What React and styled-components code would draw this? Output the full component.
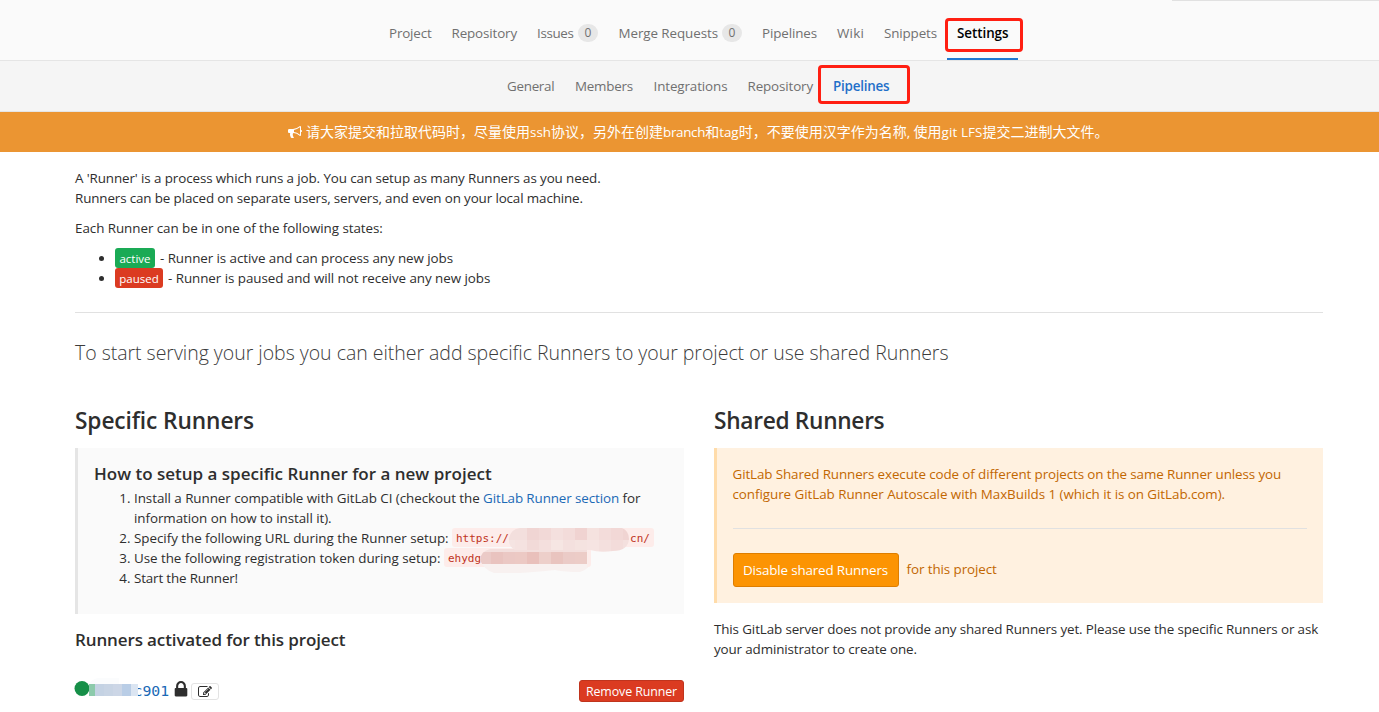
import React from "react";
import styled, { createGlobalStyle } from "styled-components";

const GlobalStyle = createGlobalStyle`
  * { box-sizing: border-box; }
  html, body { margin: 0; padding: 0; }
  body {
    width: 1379px;
    height: 712px;
    overflow: hidden;
    background: #fff;
    color: #2e2e2e;
    font-family: "Open Sans", "Noto Sans CJK SC", sans-serif;
    font-size: 13.4px;
    line-height: 20px;
    white-space: nowrap;
  }
  h3, h4, p, ul, ol { margin: 0; padding: 0; }
`;

const Tracked = styled.span`
  letter-spacing: ${(p) => p.$ls || 0}px;
`;

const Page = styled.div`
  display: flex;
  flex-direction: column;
  height: 712px;
`;

const MainNav = styled.nav`
  position: relative;
  display: flex;
  height: 61px;
  padding-left: 379px;
  background: #fafafa;
  border-bottom: 1px solid #e5e5e5;
`;

const HeaderEdge = styled.div`
  position: absolute;
  top: 0;
  right: 0;
  width: 207px;
  height: 1px;
  background: #e1e1e1;
`;

const SubNav = styled.nav`
  display: flex;
  height: 51px;
  padding-left: 497px;
  background: #f5f5f5;
  border-bottom: 1px solid #e5e5e5;
`;

const Tab = styled.a`
  position: relative;
  display: flex;
  flex: none;
  align-items: center;
  width: ${(p) => p.$width}px;
  padding: ${(p) => (p.$sub ? "0 10px 1px" : "6px 10px 0")};
  color: #707070;
  ${(p) => p.$active && `color: ${p.$sub ? "#1f6fc9" : "#000"}; font-weight: 600;`}
  ${(p) => p.$active && !p.$sub && "box-shadow: inset 0 -2px 0 #1f78d1;"}
`;

const Count = styled.span`
  width: 20px;
  height: 18px;
  margin-left: auto;
  margin-right: ${(p) => p.$gap}px;
  border-radius: 9px;
  background: #e7e7e7;
  font-size: 12px;
  line-height: 18px;
  text-align: center;
`;

const Marker = styled.span`
  position: absolute;
  top: ${(p) => p.$top}px;
  left: ${(p) => p.$left}px;
  width: ${(p) => p.$width}px;
  height: ${(p) => p.$height}px;
  border: 3px solid #ff1f12;
  border-radius: 4px;
`;

const Banner = styled.div`
  display: flex;
  align-items: center;
  gap: 4px;
  height: 40px;
  padding-left: 288px;
  background: #eb9532;
  color: #fff;
  font-size: 14px;
`;

const Latin = styled.span`
  font-size: 13.4px;
  letter-spacing: ${(p) => p.$ls || 0}px;
`;

const Content = styled.main`
  display: flex;
  flex-direction: column;
  width: 1248px;
  margin-left: 75px;
  padding-top: 16px;
`;

const Paragraph = styled.p`
  margin-bottom: 10px;
`;

const StateList = styled.ul`
  padding-left: 40px;
`;

const StateItem = styled.li`
  height: 20px;
`;

const StateBadge = styled.span`
  display: inline-block;
  height: 20px;
  width: ${(p) => p.$width}px;
  margin-right: 5px;
  border-radius: 3px;
  background: ${(p) => p.$color};
  color: #fff;
  font-size: 11.5px;
  line-height: 21px;
  text-align: center;
  vertical-align: top;
`;

const Rule = styled.div`
  height: 1px;
  margin-top: ${(p) => p.$gap}px;
  background: ${(p) => p.$color || "#e1e1e1"};
`;

const Lead = styled.h4`
  margin-top: 26px;
  color: #3c3c3c;
  font-size: 19.5px;
  font-weight: 300;
  line-height: 28px;
`;

const Columns = styled.div`
  display: grid;
  grid-template-columns: 609px 609px;
  column-gap: 30px;
  margin-top: 38px;
`;

const Column = styled.section`
  display: flex;
  flex-direction: column;
`;

const ColumnTitle = styled.h3`
  font-size: 22.7px;
  font-weight: 600;
  line-height: 32px;
  margin-bottom: 11px;
`;

const HelpBox = styled.div`
  position: relative;
  height: 166px;
  padding: 15px 16px;
  border-left: 3px solid #e5e5e5;
  background: #fafafa;
`;

const SubTitle = styled.h4`
  margin-top: ${(p) => p.$top || 0}px;
  font-size: 17px;
  font-weight: 600;
  line-height: 22px;
`;

const Steps = styled.ol`
  margin-top: 3px;
  padding-left: 40px;
`;

const Link = styled.a`
  color: #1b69b6;
  letter-spacing: -0.1px;
`;

const Code = styled.code`
  display: inline-block;
  height: 19px;
  width: ${(p) => p.$width}px;
  padding: 0 4px;
  border-radius: 3px;
  background: #fdecea;
  color: #c0341d;
  font-family: "DejaVu Sans Mono", monospace;
  font-size: 11px;
  line-height: 22px;
  vertical-align: top;
`;

const CodeRow = styled.span`
  display: inline-flex;
  justify-content: space-between;
  width: 100%;
`;

const Smudge = styled.svg`
  position: absolute;
  left: 402px;
  top: 79px;
`;

const WarnBox = styled.div`
  height: 155px;
  padding: 16px 16px 0 15.5px;
  border-left: 3px solid #ffdcaa;
  background: #fff1e0;
  color: #c26700;
`;

const Action = styled.div`
  display: flex;
  align-items: center;
  gap: 8px;
  margin-top: 24px;
`;

const ActionNote = styled(Tracked)`
  padding-bottom: 2px;
`;

const WarnButton = styled.button`
  width: 166px;
  height: 34px;
  padding: 0;
  border: 1px solid #de7e00;
  border-radius: 3px;
  background: #fc9403;
  color: #fff;
  font: inherit;
  letter-spacing: -0.16px;
`;

const Note = styled.p`
  margin-top: 16px;
`;

const RunnerRow = styled.div`
  display: flex;
  align-items: center;
  height: 22px;
  margin-top: 29px;
`;

const RunnerName = styled.span`
  position: relative;
  display: flex;
  align-items: center;
  width: 99px;
  height: 22px;
  padding: 0 0 1px 58.5px;
  color: #1b69b6;
  font-family: "DejaVu Sans Mono", monospace;
  font-size: 14.8px;
`;

const StatusArt = styled.svg`
  position: absolute;
  left: -1px;
  top: -4px;
`;

const LockIcon = styled.svg`
  margin-bottom: 5px;
`;

const EditButton = styled.button`
  display: flex;
  align-items: center;
  justify-content: center;
  width: 28px;
  height: 17px;
  margin: 1px auto 0 3px;
  padding: 0;
  border: 1px solid #e3e3e3;
  border-radius: 3px;
  background: #fff;
  color: #2e2e2e;
`;

const RemoveButton = styled.button`
  width: 105px;
  height: 22px;
  padding: 1px 0 0;
  border: 1px solid #c0341d;
  border-radius: 3px;
  background: #db3b21;
  color: #fff;
  font: inherit;
  font-size: 12.4px;
  line-height: 20px;
  letter-spacing: -0.1px;
`;

const Icon = ({ d, size }) => (
  <svg width={size} height={size} viewBox="0 0 1792 1792" fill="currentColor">
    <path d={d} />
  </svg>
);

const BULLHORN =
  "M1664 640q53 0 90.5 37.5t37.5 90.5-37.5 90.5-90.5 37.5v384q0 52-38 90t-90 38q-417-347-812-380-58 19-91 66t-31 100.5 40 92.5q-20 33-23 65.5t6 58 33.5 55 48 50 61.5 50.5q-29 58-111.5 83t-168.5 11.5-132-55.5q-7-23-29.5-87.5t-32-94.5-23-89-15-101 3.5-98.5 22-110.5h-122q-66 0-113-47t-47-113v-192q0-66 47-113t113-47h480q435 0 896-384 52 0 90 38t38 90v384zm-128 604v-954q-394 302-768 343v270q377 42 768 341z";
const LOCK =
  "M640 768h512v-192q0-106-75-181t-181-75-181 75-75 181v192zm832 96v576q0 40-28 68t-68 28h-960q-40 0-68-28t-28-68v-576q0-40 28-68t68-28h32v-192q0-184 132-316t316-132 316 132 132 316v192h32q40 0 68 28t28 68z";
const EDIT =
  "M888 1184l116-116-152-152-116 116v56h96v96h56zm440-720q-16-16-33 1l-350 350q-17 17-1 33t33-1l350-350q17-17 1-33zm80 594v190q0 119-84.5 203.5t-203.5 84.5h-832q-119 0-203.5-84.5t-84.5-203.5v-832q0-119 84.5-203.5t203.5-84.5h832q63 0 117 25 15 7 18 23 3 17-9 29l-49 49q-14 14-32 8-23-6-45-6h-832q-66 0-113 47t-47 113v832q0 66 47 113t113 47h832q66 0 113-47t47-113v-126q0-13 9-22l64-64q15-15 35-7t20 29zm-96-738l288 288-672 672h-288v-288zm444 132l-92 92-288-288 92-92q28-28 68-28t68 28l152 152q28 28 28 68t-28 68z";

const mainTabs = [
  { label: "Project", width: 62.5, ls: -0.17 },
  { label: "Repository", width: 85.5, ls: -0.13 },
  { label: "Issues", width: 81.5, ls: -0.36, count: 0, gap: 0.5 },
  { label: "Merge Requests", width: 143.5, ls: -0.08, count: 0, gap: 0 },
  { label: "Pipelines", width: 75, ls: -0.12 },
  { label: "Wiki", width: 47, ls: 0.2 },
  { label: "Snippets", width: 73, ls: -0.13 },
  { label: "Settings", width: 71, ls: -0.05, active: true, marker: [18, -2, 78, 34] },
];

const subTabs = [
  { label: "General", width: 68, ls: -0.28 },
  { label: "Members", width: 78.5, ls: -0.22 },
  { label: "Integrations", width: 94, ls: -0.11 },
  { label: "Repository", width: 85.5, ls: -0.13 },
  { label: "Pipelines", width: 77, ls: -0.2, active: true, marker: [4, -5, 92, 39] },
];

const upperBlocks = ["#f3dfdd", "#f3dfdd", "#f0d5d3", "#f2d9d7", "#f4e0de", "#f3dcda", "#f0d3d1", "#f5e2df", "#f3dcda", "#f2d8d6", "#f0d4d2"];
const middleBlocks = ["#f5e4e2", "#f5e2e0", "#f2dad8", "#f4dfdd", "#f6e6e3", "#f4e0de", "#f5e3e0", "#f6e4e2", "#f4e0de", "#f3dcda", "#f4e0de"];
const lowerBlocks = ["#ebcac7", "#e9c3bf", "#ebc8c4", "#ecc9c4", "#e9c0bb", "#edcfca", "#e9c4bf", "#ebcbc7", "#ecccc7", "#e8c4bd"];
const nameBlocks = ["#c4d2e3", "#c8d4e4", "#ccd6e6", "#b9cde6", "#dbe5f2"];

const Tabs = ({ items, sub }) =>
  items.map((t) => (
    <Tab key={t.label} $width={t.width} $active={t.active} $sub={sub}>
      <Tracked $ls={t.ls}>{t.label}</Tracked>
      {t.count !== undefined && <Count $gap={t.gap}>{t.count}</Count>}
      {t.marker && (
        <Marker $top={t.marker[0]} $left={t.marker[1]} $width={t.marker[2]} $height={t.marker[3]} />
      )}
    </Tab>
  ));

export default function App() {
  return (
    <Page>
      <GlobalStyle />
      <MainNav>
        <Tabs items={mainTabs} />
        <HeaderEdge />
      </MainNav>
      <SubNav>
        <Tabs items={subTabs} sub />
      </SubNav>
      <Banner>
        <Icon d={BULLHORN} size={14} />
        <span>
          请大家提交和拉取代码时，尽量使用<Latin>ssh</Latin>协议，另外在创建<Latin $ls={-0.3}>branch</Latin>
          和<Latin>tag</Latin>时，不要使用汉字作为名称<Latin>, </Latin>使用<Latin $ls={0.1}>git LFS</Latin>
          提交二进制大文件。
        </span>
      </Banner>
      <Content>
        <Paragraph>
          <Tracked $ls={-0.1}>A 'Runner' is a process which runs a job. You can setup as many Runners as you need.</Tracked>
          <br />
          <Tracked $ls={-0.125}>Runners can be placed on separate users, servers, and even on your local machine.</Tracked>
        </Paragraph>
        <Paragraph>
          <Tracked $ls={-0.05}>Each Runner can be in one of the following states:</Tracked>
        </Paragraph>
        <StateList>
          <StateItem>
            <StateBadge $width={40} $color="#1aaa55">active</StateBadge>
            <Tracked $ls={-0.07}>- Runner is active and can process any new jobs</Tracked>
          </StateItem>
          <StateItem>
            <StateBadge $width={48} $color="#db3b21">paused</StateBadge>
            <Tracked $ls={-0.055}>- Runner is paused and will not receive any new jobs</Tracked>
          </StateItem>
        </StateList>
        <Rule $gap={24} />
        <Lead>
          <Tracked $ls={-0.025}>
            To start serving your jobs you can either add specific Runners to your project or use shared Runners
          </Tracked>
        </Lead>
        <Columns>
          <Column>
            <ColumnTitle>
              <Tracked $ls={-0.1}>Specific Runners</Tracked>
            </ColumnTitle>
            <HelpBox>
              <SubTitle>How to setup a specific Runner for a new project</SubTitle>
              <Steps>
                <li>
                  <Tracked $ls={-0.055}>Install a Runner compatible with GitLab CI (checkout the </Tracked>
                  <Link>GitLab Runner section</Link> for
                  <br />
                  <Tracked $ls={-0.06}>information on how to install it).</Tracked>
                </li>
                <li>
                  <Tracked $ls={-0.035}>Specify the following URL during the Runner setup: </Tracked>
                  <Code $width={202}>
                    <CodeRow>
                      <span>https://</span>
                      <span>cn/</span>
                    </CodeRow>
                  </Code>
                </li>
                <li>
                  <Tracked $ls={-0.045}>Use the following registration token during setup: </Tracked>
                  <Code $width={147}>ehydg</Code>
                </li>
                <li>
                  <Tracked $ls={-0.16}>Start the Runner!</Tracked>
                </li>
              </Steps>
              <Smudge width="152" height="48" viewBox="480 527 152 48">
                <clipPath id="upper">
                  <path d="M520 528H622Q629 531 629 539Q628 551 613 551Q600 553 590 550L515 550Q508 546 509 538Q511 529 520 528Z" />
                </clipPath>
                <clipPath id="lower">
                  <path d="M490 549H588V564Q590 569 580 572Q565 572 555 570Q535 572 520 573H494Q484 570 480 560Q481 551 490 549Z" />
                </clipPath>
                <g clipPath="url(#lower)">
                  <rect x="480" y="549" width="110" height="24" fill="#f8f1f0" />
                  <rect x="480" y="549" width="110" height="4" fill="#f3dfdd" />
                  {lowerBlocks.map((c, i) => (
                    <rect key={i} x={479 + i * 12} y="552" width="12" height="12" fill={c} />
                  ))}
                  <rect x="587" y="549" width="4" height="24" fill="#fbeeec" />
                </g>
                <g clipPath="url(#upper)">
                  {upperBlocks.map((c, i) => (
                    <rect key={i} x={503 + i * 12} y="528" width="12" height="12" fill={c} />
                  ))}
                  {middleBlocks.map((c, i) => (
                    <rect key={i} x={503 + i * 12} y="540" width="12" height="12" fill={c} />
                  ))}
                </g>
              </Smudge>
            </HelpBox>
            <SubTitle $top={15}>
              <Tracked $ls={-0.12}>Runners activated for this project</Tracked>
            </SubTitle>
            <RunnerRow>
              <RunnerName>
                c901
                <StatusArt width="64" height="24" viewBox="74 676 64 24">
                  <circle cx="82" cy="688.5" r="7.5" fill="#168f48" />
                  <path d="M89 684Q92 679 98 678H119V684Z" fill="#fbfcfd" />
                  <rect x="89" y="684" width="6" height="12" fill="#8ccaab" />
                  {nameBlocks.map((c, i) => (
                    <rect key={i} x={95 + i * 9} y="684" width="9" height="12" fill={c} />
                  ))}
                </StatusArt>
              </RunnerName>
              <LockIcon width="14" height="16" viewBox="256 128 1280 1463" fill="currentColor">
                <path d={LOCK} />
              </LockIcon>
              <EditButton>
                <Icon d={EDIT} size={14} />
              </EditButton>
              <RemoveButton>Remove Runner</RemoveButton>
            </RunnerRow>
          </Column>
          <Column>
            <ColumnTitle>
              <Tracked $ls={-0.3}>Shared Runners</Tracked>
            </ColumnTitle>
            <WarnBox>
              <Tracked $ls={-0.105}>
                GitLab Shared Runners execute code of different projects on the same Runner unless you
              </Tracked>
              <br />
              <Tracked $ls={-0.05}>configure GitLab Runner Autoscale with MaxBuilds 1 (which it is on GitLab.com).</Tracked>
              <Rule $gap={24} $color="#e1e1e1" />
              <Action>
                <WarnButton>Disable shared Runners</WarnButton>
                <ActionNote $ls={-0.08}>for this project</ActionNote>
              </Action>
            </WarnBox>
            <Note>
              <Tracked $ls={-0.115}>
                This GitLab server does not provide any shared Runners yet. Please use the specific Runners or ask
              </Tracked>
              <br />
              <Tracked $ls={-0.125}>your administrator to create one.</Tracked>
            </Note>
          </Column>
        </Columns>
      </Content>
    </Page>
  );
}
